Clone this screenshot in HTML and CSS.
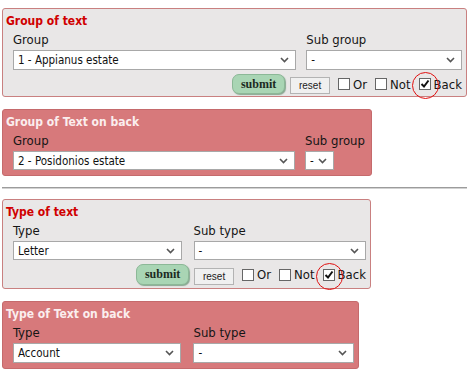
FILE: index.html
```html
<html>
<head>
<link rel="stylesheet" href="styles.css">
</head>
<body>
<div class="page">

  <div class="box front w1">
    <div class="box-title">Group of text</div>
    <div class="fields">
      <div class="field f-group">
        <label>Group</label>
        <div class="select"><span>1 - Appianus estate</span><svg class="chev" width="9" height="6" viewBox="0 0 9 6"><path d="M1 1l3.5 3.5L8 1" fill="none" stroke="#555" stroke-width="1.6"/></svg></div>
      </div>
      <div class="field f-sub">
        <label>Sub group</label>
        <div class="select"><span>-</span><svg class="chev" width="9" height="6" viewBox="0 0 9 6"><path d="M1 1l3.5 3.5L8 1" fill="none" stroke="#555" stroke-width="1.6"/></svg></div>
      </div>
    </div>
    <div class="actions">
      <button class="btn-submit">submit</button>
      <button class="btn-reset">reset</button>
      <span class="check"><span class="cbox"></span>Or</span>
      <span class="check"><span class="cbox"></span>Not</span>
      <span class="check"><span class="cbox on"><svg width="10" height="10" viewBox="0 0 10 10"><path d="M1.5 5l2.5 2.5L8.5 1.5" fill="none" stroke="#111" stroke-width="2"/></svg><span class="ring"></span></span>Back</span>
    </div>
  </div>

  <div class="box back w2">
    <div class="box-title">Group of Text on back</div>
    <div class="fields">
      <div class="field f-group2">
        <label>Group</label>
        <div class="select short"><span>2 - Posidonios estate</span><svg class="chev" width="9" height="6" viewBox="0 0 9 6"><path d="M1 1l3.5 3.5L8 1" fill="none" stroke="#555" stroke-width="1.6"/></svg></div>
      </div>
      <div class="field f-sub2">
        <label>Sub group</label>
        <div class="select short tiny"><span>-</span><svg class="chev" width="9" height="6" viewBox="0 0 9 6"><path d="M1 1l3.5 3.5L8 1" fill="none" stroke="#555" stroke-width="1.6"/></svg></div>
      </div>
    </div>
  </div>

  <div class="rule"></div>

  <div class="box front w3">
    <div class="box-title">Type of text</div>
    <div class="fields wide-gap">
      <div class="field f-type">
        <label>Type</label>
        <div class="select short"><span>Letter</span><svg class="chev" width="9" height="6" viewBox="0 0 9 6"><path d="M1 1l3.5 3.5L8 1" fill="none" stroke="#555" stroke-width="1.6"/></svg></div>
      </div>
      <div class="field f-subtype">
        <label>Sub type</label>
        <div class="select short"><span>-</span><svg class="chev" width="9" height="6" viewBox="0 0 9 6"><path d="M1 1l3.5 3.5L8 1" fill="none" stroke="#555" stroke-width="1.6"/></svg></div>
      </div>
    </div>
    <div class="actions">
      <button class="btn-submit tall">submit</button>
      <button class="btn-reset">reset</button>
      <span class="check"><span class="cbox"></span>Or</span>
      <span class="check"><span class="cbox"></span>Not</span>
      <span class="check"><span class="cbox on"><svg width="10" height="10" viewBox="0 0 10 10"><path d="M1.5 5l2.5 2.5L8.5 1.5" fill="none" stroke="#111" stroke-width="2"/></svg><span class="ring"></span></span>Back</span>
    </div>
  </div>

  <div class="box back w4">
    <div class="box-title">Type of Text on back</div>
    <div class="fields wide-gap">
      <div class="field f-type">
        <label>Type</label>
        <div class="select"><span>Account</span><svg class="chev" width="9" height="6" viewBox="0 0 9 6"><path d="M1 1l3.5 3.5L8 1" fill="none" stroke="#555" stroke-width="1.6"/></svg></div>
      </div>
      <div class="field f-subtype2">
        <label>Sub type</label>
        <div class="select"><span>-</span><svg class="chev" width="9" height="6" viewBox="0 0 9 6"><path d="M1 1l3.5 3.5L8 1" fill="none" stroke="#555" stroke-width="1.6"/></svg></div>
      </div>
    </div>
  </div>

</div>
</body>
</html>
```
FILE: styles.css
```css
body {
    margin: 0;
    background: #ffffff;
    font-family: "DejaVu Sans Condensed", "DejaVu Sans", sans-serif;
    color: #151515;
}
.page {
    padding: 8px 0 0 2px;
}
.box {
    box-sizing: border-box;
    border: 1px solid #c98080;
    border-radius: 3px;
    padding: 5px 4px 2px 3px;
}
.box.front {
    background: #e9e7e7;
}
.box.back {
    background: #d7797b;
    border-color: #c56a6c;
    padding-bottom: 5px;
    margin-top: 12px;
}
.w1 { width: 465px; }
.w2 { width: 370px; }
.w3 { width: 369px; padding-bottom: 3px; }
.w4 { width: 357px; margin-top: 11px; }
.box-title {
    font-size: 12px;
    font-weight: bold;
    line-height: 14px;
    color: #d00000;
}
.back .box-title {
    color: #fbeeee;
}
.fields {
    display: flex;
    gap: 10px;
    padding-left: 7px;
    margin-top: 4px;
}
.fields.wide-gap {
    gap: 12px;
}
.field label {
    display: block;
    font-size: 13px;
    line-height: 15px;
    margin-bottom: 3px;
}
.f-group { width: 284px; }
.f-sub { width: 156px; }
.f-group2 { width: 282px; }
.f-sub2 { width: 62px; }
.f-type { width: 169px; }
.f-subtype { width: 173px; }
.f-subtype2 { width: 161px; }
.select {
    box-sizing: border-box;
    height: 20px;
    display: flex;
    align-items: center;
    justify-content: space-between;
    background: #ffffff;
    border: 1px solid #a8a8a8;
    padding: 0 6px 0 4px;
    font-size: 11.5px;
    color: #111;
}
.select.short {
    height: 19px;
}
.select.tiny {
    width: 29px;
}
.actions {
    display: flex;
    justify-content: flex-end;
    align-items: center;
    margin-top: 4px;
    font-size: 13px;
}
.btn-submit {
    box-sizing: border-box;
    width: 53px;
    height: 20px;
    padding: 0;
    border: 1px solid #8cb897;
    border-radius: 7px;
    background: #a9d5b4;
    box-shadow: 1px 1px 1px #8aa892;
    font-family: "Liberation Serif", serif;
    font-weight: bold;
    font-size: 12px;
    color: #1c2a1f;
}
.btn-submit.tall {
    height: 21px;
}
.btn-reset {
    box-sizing: border-box;
    width: 40px;
    height: 17px;
    margin-left: 5px;
    margin-top: 3px;
    padding: 0;
    border: 1px solid #b3b3b3;
    background: #f0f0f0;
    font-family: "Liberation Sans", sans-serif;
    font-size: 10px;
    color: #222;
}
.check {
    display: inline-flex;
    align-items: center;
    gap: 3px;
    margin-left: 8px;
    line-height: 15px;
}
.cbox {
    position: relative;
    box-sizing: border-box;
    width: 12px;
    height: 12px;
    border: 1px solid #666;
    background: #fff;
    display: flex;
    align-items: center;
    justify-content: center;
}
.ring {
    position: absolute;
    left: -8px;
    top: -7px;
    width: 25px;
    height: 25px;
    border: 1px solid #e01010;
    border-radius: 50%;
}
.rule {
    width: 465px;
    height: 0;
    border-top: 1px solid #9c9c9c;
    border-bottom: 1px solid #d2d2d2;
    margin: 11px 0 10px;
}
```
